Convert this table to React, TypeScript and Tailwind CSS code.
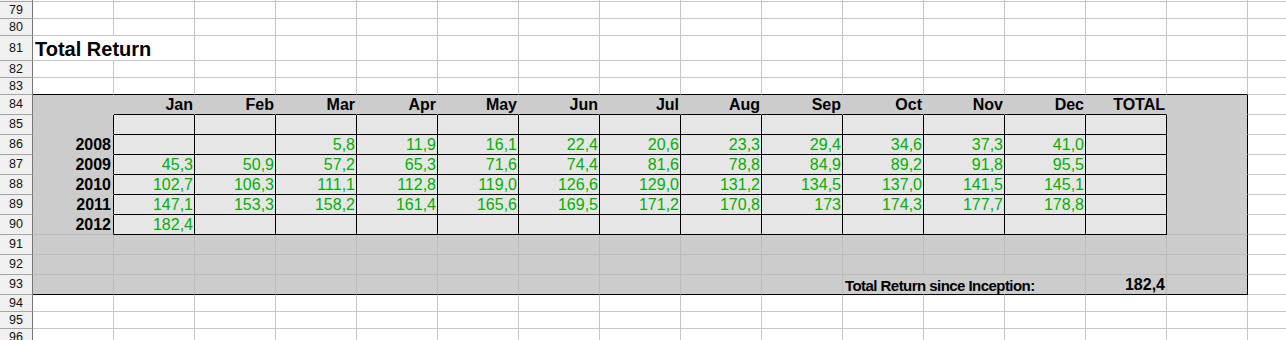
import React from "react";

type RowDef = { n: number | null; h: string };

const ROWS: RowDef[] = [
  { n: null, h: "h-[2px]" },
  { n: 79, h: "h-[17px]" },
  { n: 80, h: "h-[17px]" },
  { n: 81, h: "h-[25px]" },
  { n: 82, h: "h-[17px]" },
  { n: 83, h: "h-[17px]" },
  { n: 84, h: "h-[20px]" },
  { n: 85, h: "h-[20px]" },
  { n: 86, h: "h-[20px]" },
  { n: 87, h: "h-[20px]" },
  { n: 88, h: "h-[20px]" },
  { n: 89, h: "h-[20px]" },
  { n: 90, h: "h-[20px]" },
  { n: 91, h: "h-[20px]" },
  { n: 92, h: "h-[20px]" },
  { n: 93, h: "h-[20px]" },
  { n: 94, h: "h-[17px]" },
  { n: 95, h: "h-[17px]" },
  { n: 96, h: "h-[17px]" },
];

const MONTHS = ["Jan", "Feb", "Mar", "Apr", "May", "Jun", "Jul", "Aug", "Sep", "Oct", "Nov", "Dec", "TOTAL"];

const RETURNS: Record<number, string[]> = {
  86: ["2008", "", "", "5,8", "11,9", "16,1", "22,4", "20,6", "23,3", "29,4", "34,6", "37,3", "41,0"],
  87: ["2009", "45,3", "50,9", "57,2", "65,3", "71,6", "74,4", "81,6", "78,8", "84,9", "89,2", "91,8", "95,5"],
  88: ["2010", "102,7", "106,3", "111,1", "112,8", "119,0", "126,6", "129,0", "131,2", "134,5", "137,0", "141,5", "145,1"],
  89: ["2011", "147,1", "153,3", "158,2", "161,4", "165,6", "169,5", "171,2", "170,8", "173", "174,3", "177,7", "178,8"],
  90: ["2012", "182,4"],
};

const COLS = 16; // A..P

const RIGHT = {
  black: "border-r-black",
  bg: "border-r-[#cccccc]",
  line: "border-r-[#bdbdbd]",
  grid: "border-r-[#c6c6c6]",
  none: "border-r-transparent",
};
const BOTTOM = {
  black: "border-b-black",
  bg: "border-b-[#cccccc]",
  line: "border-b-[#bdbdbd]",
  grid: "border-b-[#c6c6c6]",
};

// grey block covers A..O, rows 84-93; bordered table is B..N, rows 85-90
const isGray = (r: number, c: number) => r >= 84 && r <= 93 && c <= 14;
const isInner = (r: number, c: number) => r >= 85 && r <= 90 && c >= 1 && c <= 13;

// cells covered by overflowing text: hide their gridline
const hidden = (r: number, c: number) => (r === 81 && c === 0) || (r === 93 && (c === 10 || c === 11));

function rightColor(r: number, c: number): keyof typeof RIGHT {
  if (isInner(r, c) || isInner(r, c + 1)) return "black";
  if (isGray(r, c) && c === 14) return "black";
  if (hidden(r, c)) return "none";
  if (isGray(r, c)) return r >= 91 ? "line" : "bg";
  return "grid";
}

function bottomColor(r: number, c: number): keyof typeof BOTTOM {
  if (isInner(r, c) || isInner(r + 1, c)) return "black";
  if (c <= 14 && (r === 83 || r === 93)) return "black";
  if (isGray(r, c)) return r >= 90 ? "line" : "bg";
  return "grid";
}

const font = "font-['Liberation_Sans',Arial,sans-serif]";

function cellContent(r: number, c: number) {
  if (r === 81 && c === 0)
    return <span className="relative z-10 mb-[1px] whitespace-nowrap pl-[2px] text-[20px] font-bold leading-none text-black">Total Return</span>;
  if (r === 84 && c >= 1 && c <= 13)
    return <span className="mb-[1px] ml-auto pr-[1px] text-[16px] font-bold leading-none text-black">{MONTHS[c - 1]}</span>;
  const row = RETURNS[r];
  if (row && c <= 12 && row[c]) {
    if (c === 0) return <span className="mb-[1px] ml-auto pr-[2px] text-[16px] font-bold leading-none text-black">{row[c]}</span>;
    return <span className="mb-[1px] ml-auto pr-[1px] text-[16px] leading-none text-[#00b000]">{row[c]}</span>;
  }
  if (r === 93 && c === 10)
    return (
      <span className="relative z-10 mb-[1px] whitespace-nowrap pl-[2px] text-[15px] font-bold leading-none tracking-[-0.55px] text-black">
        Total Return since Inception:
      </span>
    );
  if (r === 93 && c === 13)
    return <span className="mb-[1px] ml-auto pr-[1px] text-[16px] font-bold leading-none text-black">182,4</span>;
  return null;
}

export default function App() {
  return (
    <div className={`w-[1286px] h-[340px] overflow-hidden bg-white ${font}`}>
      {ROWS.map((row, i) => {
        const r = row.n ?? 78;
        return (
          <div key={i} className={`grid grid-cols-[33px_repeat(16,81px)] ${row.h}`}>
            <div className="flex items-center justify-center border-r border-b border-r-[#767676] border-b-[#a6a6a6] bg-[#f0f0f0] text-[12.5px] leading-none text-[#111]">
              {row.n}
            </div>
            {Array.from({ length: COLS }, (_, c) => {
              const bg = isInner(r, c) ? "bg-[#e6e6e6]" : isGray(r, c) ? "bg-[#cccccc]" : "";
              return (
                <div
                  key={c}
                  className={`flex items-end overflow-visible border-r border-b ${RIGHT[rightColor(r, c)]} ${BOTTOM[bottomColor(r, c)]} ${bg}`}
                >
                  {cellContent(r, c)}
                </div>
              );
            })}
          </div>
        );
      })}
    </div>
  );
}
